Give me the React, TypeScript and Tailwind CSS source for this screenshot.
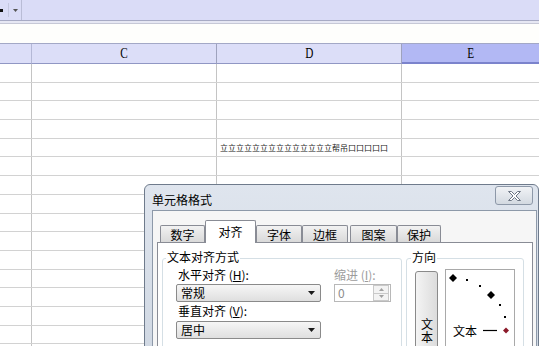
import React from "react";

const rows = Array.from({ length: 16 }, (_, i) => i);

function Dropdown({ value }: { value: string }) {
  return (
    <div className="w-[145px] h-[18px] border border-[#8a8a8a] rounded-[2px] bg-gradient-to-b from-[#f6f6f6] to-[#dfdfdf] flex items-center justify-between pl-[4px] pr-[5px]">
      <span className="text-[12px] leading-[14px]">{value}</span>
      <svg width="7" height="4" viewBox="0 0 7 4">
        <path d="M0 0h7L3.5 4z" fill="#1a1a1a" />
      </svg>
    </div>
  );
}

function Tab({ label, active }: { label: string; active?: boolean }) {
  if (active) {
    return (
      <div className="w-[51px] h-[23px] -mb-[1px] z-10 border border-b-0 border-[#898c95] bg-white flex items-center justify-center text-[12px] rounded-t-[2px]">
        {label}
      </div>
    );
  }
  return (
    <div className="h-[17px] border border-b-0 border-[#898c95] bg-gradient-to-b from-[#f2f2f2] to-[#d9d9d9] flex items-center justify-center text-[12px] leading-[14px] pt-[1px] rounded-t-[2px]">
      {label}
    </div>
  );
}

export default function App() {
  return (
    <div className="relative w-[539px] h-[346px] overflow-hidden bg-white font-['Noto_Sans_CJK_SC',sans-serif] text-black">
      {/* barra de herramientas */}
      <div className="h-[21px] bg-[#dadcf7] border-b border-[#a7aac4] flex">
        <div className="w-[22px] h-full border-r border-[#b9bcd6] flex items-center">
          <div className="w-[3px] h-[3px] bg-[#111]" />
          <div className="w-px h-[14px] bg-[#c4c7e0] ml-[5px]" />
          <svg className="ml-[4px]" width="5" height="3" viewBox="0 0 5 3">
            <path d="M0 0h5L2.5 3z" fill="#555" />
          </svg>
        </div>
      </div>
      <div className="h-[3px] bg-[#e6e7f3] border-b border-[#c6c8d6]" />
      <div className="h-[19px] bg-[#fefefc]" />

      {/* cabecera de columnas */}
      <div className="h-[21px] flex border-t border-[#a3a8c6]">
        <div className="w-[32px] bg-[#dcdef8] border-r border-[#b4b8d6] border-b border-b-[#9097c4]" />
        {["C", "D"].map((c) => (
          <div
            key={c}
            className="w-[185px] bg-[#dcdef8] border-r border-[#9ea2bd] border-b border-b-[#9097c4] flex items-center justify-center"
          >
            <span className="inline-block font-['Liberation_Serif',serif] text-[15px] leading-none scale-x-75">{c}</span>
          </div>
        ))}
        <div className="flex-1 bg-[#b2b8f4] border-b-2 border-[#7b83cc] flex items-center justify-center">
          <span className="inline-block font-['Liberation_Serif',serif] text-[15px] leading-none scale-x-75">E</span>
        </div>
      </div>

      {/* filas */}
      {rows.map((r) => (
        <div key={r} className="h-[18.7px] flex border-b border-[#d2d2d2]">
          <div className="w-[32px] border-r border-[#c4c4c4]" />
          <div className="w-[185px] border-r border-[#c4c4c4]" />
          <div className="w-[185px] border-r border-[#c4c4c4] flex items-center pl-[3px]">
            {r === 4 && (
              <span className="text-[8px] leading-none whitespace-nowrap text-[#222]">
                立立立立立立立立立立立立立立帮吊口口口口口
              </span>
            )}
          </div>
          <div className="flex-1" />
        </div>
      ))}

      {/* diálogo 单元格格式 */}
      <div className="absolute left-[144px] top-[184px] w-[395px] h-[180px] rounded-t-[6px] border border-[#6f7b8c] bg-gradient-to-b from-[#dfe5ee] to-[#cfd7e2] flex flex-col pl-[7px] pr-[1px]">
        <div className="h-[28px] flex justify-between items-start">
          <span className="mt-[8px] text-[12px] leading-[14px]">单元格格式</span>
          <div className="mt-[1px] mr-[4px] w-[38px] h-[19px] rounded-[3px] border border-[#8d98a8] bg-gradient-to-b from-[#f1f3f6] to-[#d3d9e1] flex items-center justify-center">
            <svg width="13" height="10" viewBox="0 0 13 10">
              <path
                d="M0.5 0.5h3l3 3 3-3h3l-4.5 4.5 4.5 4.5h-3l-3-3-3 3h-3l4.5-4.5z"
                fill="#fff"
                stroke="#6d7685"
                strokeWidth="1"
              />
            </svg>
          </div>
        </div>

        <div className="flex-1 border border-[#8d99a9] bg-[#f6f6f6] pt-[9px] pl-[4px] pr-[3px]">
          <div className="flex items-end pl-[3px] h-[22px]">
            <div className="w-[45px]"><Tab label="数字" /></div>
            <Tab label="对齐" active />
            <div className="w-[46px]"><Tab label="字体" /></div>
            <div className="w-[46px]"><Tab label="边框" /></div>
            <div className="w-[49px] pl-[2px]"><Tab label="图案" /></div>
            <div className="w-[44px]"><Tab label="保护" /></div>
          </div>

          <div className="h-[120px] border border-[#898c95] bg-white flex pt-[15px] pl-[4px]">
            {/* 文本对齐方式 */}
            <div className="relative w-[240px] h-[110px] border border-[#d5dfe5] rounded-[3px] flex pt-[8px] pl-[13px] gap-[13px]">
              <span className="absolute -top-[9px] left-[3px] bg-white px-px text-[12px] leading-[13px]">文本对齐方式</span>
              <div className="w-[145px] flex flex-col">
                <span className="ml-[2px] h-[15px] text-[12px] leading-[15px]">
                  水平对齐 (<span className="underline">H</span>):
                </span>
                <div className="mt-[2px]"><Dropdown value="常规" /></div>
                <span className="ml-[2px] mt-[1px] h-[15px] text-[12px] leading-[15px]">
                  垂直对齐 (<span className="underline">V</span>):
                </span>
                <div className="mt-[3px]"><Dropdown value="居中" /></div>
              </div>
              <div className="flex flex-col">
                <span className="h-[15px] text-[12px] leading-[15px] text-[#9c9c9c]">
                  缩进 (<span className="underline">I</span>):
                </span>
                <div className="mt-[2px] w-[57px] h-[18px] border border-[#b8b8b8] bg-white flex items-center justify-between pl-[3px] pr-px">
                  <span className="text-[12px] leading-none text-[#8c8c8c]">0</span>
                  <div className="w-[16px] h-[16px] flex flex-col">
                    <div className="flex-1 border border-[#c9c9c9] bg-[#f3f3f3] flex items-center justify-center">
                      <svg width="5" height="3" viewBox="0 0 5 3"><path d="M0 3h5L2.5 0z" fill="#a0a0a0" /></svg>
                    </div>
                    <div className="flex-1 border border-t-0 border-[#c9c9c9] bg-[#f3f3f3] flex items-center justify-center">
                      <svg width="5" height="3" viewBox="0 0 5 3"><path d="M0 0h5L2.5 3z" fill="#a0a0a0" /></svg>
                    </div>
                  </div>
                </div>
              </div>
            </div>

            {/* 方向 */}
            <div className="relative ml-[4px] w-[118px] h-[110px] border border-[#d5dfe5] rounded-[3px] flex pt-[12px] pl-[8px] gap-[7px]">
              <span className="absolute -top-[9px] left-[4px] bg-white px-px text-[12px] leading-[13px]">方向</span>
              <div className="w-[23px] h-[119px] shrink-0 rounded-[3px] border border-[#8a8a8a] bg-gradient-to-r from-[#f4f4f4] to-[#dcdcdc] flex items-center justify-center">
                <span className="[writing-mode:vertical-rl] text-[12px] leading-[14px] tracking-[1px]">文本</span>
              </div>
              <div className="relative -mt-[2px] w-[70px] h-[90px] shrink-0 border border-[#a9a9a9] bg-white">
                <svg className="absolute left-0 top-0" width="68" height="88" viewBox="0 0 68 88">
                  <path d="M7 4l4 4-4 4-4-4z" fill="#000" />
                  <rect x="20" y="9" width="2" height="2" fill="#000" />
                  <rect x="33" y="15" width="2" height="2" fill="#000" />
                  <path d="M45 21l4 4-4 4-4-4z" fill="#000" />
                  <rect x="53" y="34" width="2" height="2" fill="#000" />
                  <rect x="58" y="46" width="2" height="2" fill="#000" />
                  <path d="M37 60.5h14" stroke="#000" strokeWidth="1.2" />
                  <path d="M60 57.5l3 3-3 3-3-3z" fill="#8b1a2a" />
                </svg>
                <span className="absolute left-[7px] top-[53px] text-[12px] leading-[15px]">文本</span>
              </div>
            </div>
          </div>
        </div>
      </div>
    </div>
  );
}
